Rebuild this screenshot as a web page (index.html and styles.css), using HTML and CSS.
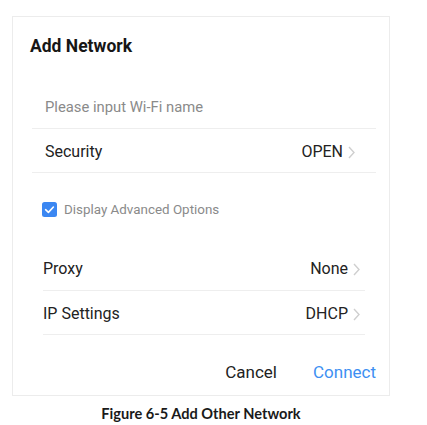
FILE: index.html
```html
<!DOCTYPE html>
<html>
<head>
<meta charset="utf-8">
<link rel="stylesheet" href="styles.css">
</head>
<body>
<div class="card">
  <div class="title">Add Network</div>
  <div class="field">Please input Wi-Fi name</div>
  <div class="row row-sec">
    <span class="label">Security</span>
    <span class="value">OPEN<svg class="chev" width="7" height="13" viewBox="0 0 7 13"><polyline points="1,1 6,6.5 1,12" fill="none" stroke="#cfcfcf" stroke-width="1.4"/></svg></span>
  </div>
  <div class="check-row">
    <span class="checkbox"><svg width="15" height="15" viewBox="0 0 15 15"><polyline points="3.6,7.7 6.4,10.4 11.4,5" fill="none" stroke="#fff" stroke-width="1.6" stroke-linecap="round" stroke-linejoin="round"/></svg></span>
    <span class="check-label">Display Advanced Options</span>
  </div>
  <div class="row row-adv first">
    <span class="label">Proxy</span>
    <span class="value">None<svg class="chev" width="7" height="13" viewBox="0 0 7 13"><polyline points="1,1 6,6.5 1,12" fill="none" stroke="#cfcfcf" stroke-width="1.4"/></svg></span>
  </div>
  <div class="row row-adv">
    <span class="label">IP Settings</span>
    <span class="value">DHCP<svg class="chev" width="7" height="13" viewBox="0 0 7 13"><polyline points="1,1 6,6.5 1,12" fill="none" stroke="#cfcfcf" stroke-width="1.4"/></svg></span>
  </div>
  <div class="actions">
    <span class="btn cancel">Cancel</span>
    <span class="btn connect">Connect</span>
  </div>
</div>
<div class="caption">Figure 6-5 Add Other Network</div>
</body>
</html>
```
FILE: styles.css
```css
html, body {
  margin: 0;
  padding: 0;
  background: #fff;
}
body {
  font-family: Roboto, "Liberation Sans", sans-serif;
  width: 427px;
}
.card {
  box-sizing: border-box;
  margin: 16px 0 0 12px;
  width: 378px;
  height: 380px;
  border: 1px solid #ececec;
  display: flex;
  flex-direction: column;
}
.title {
  margin: 19px 0 0 17px;
  font-size: 17.5px;
  line-height: 20px;
  font-weight: 700;
  color: #161616;
}
.field {
  margin: 41px 13px 0 19px;
  padding: 0 0 11px 13px;
  font-size: 14.8px;
  line-height: 20px;
  color: #8a8a8a;
  border-bottom: 1px solid #eeeeee;
}
.row {
  display: flex;
  justify-content: space-between;
  align-items: center;
  font-size: 16px;
  line-height: 20px;
  color: #222;
  border-bottom: 1px solid #eeeeee;
}
.row-sec {
  margin: 0 13px 0 19px;
  padding: 13px 21px 10px 13px;
}
.row-adv {
  margin: 0 24px 0 30px;
  padding: 13px 5px 10px 0;
}
.row-adv.first {
  margin-top: 29px;
  padding-bottom: 11px;
}
.value {
  display: flex;
  align-items: center;
  gap: 5px;
}
.chev {
  display: block;
}
.check-row {
  display: flex;
  align-items: center;
  margin: 29px 0 0 29px;
  height: 15px;
  gap: 7px;
}
.checkbox {
  width: 15px;
  height: 15px;
  border-radius: 2.5px;
  background: #3b87f2;
  display: block;
}
.checkbox svg {
  display: block;
}
.check-label {
  font-size: 13.4px;
  line-height: 15px;
  color: #8a8a8a;
}
.actions {
  display: flex;
  justify-content: flex-end;
  gap: 36px;
  margin: 27px 13px 0 0;
  font-size: 17px;
  line-height: 20px;
}
.cancel {
  color: #222;
}
.connect {
  color: #3d8ff2;
}
.caption {
  width: 378px;
  margin: 9px 0 0 12px;
  text-align: center;
  font-family: Lato, "Open Sans", sans-serif;
  font-weight: 700;
  font-size: 14.6px;
  line-height: 17px;
  color: #1a1a1a;
}
```
